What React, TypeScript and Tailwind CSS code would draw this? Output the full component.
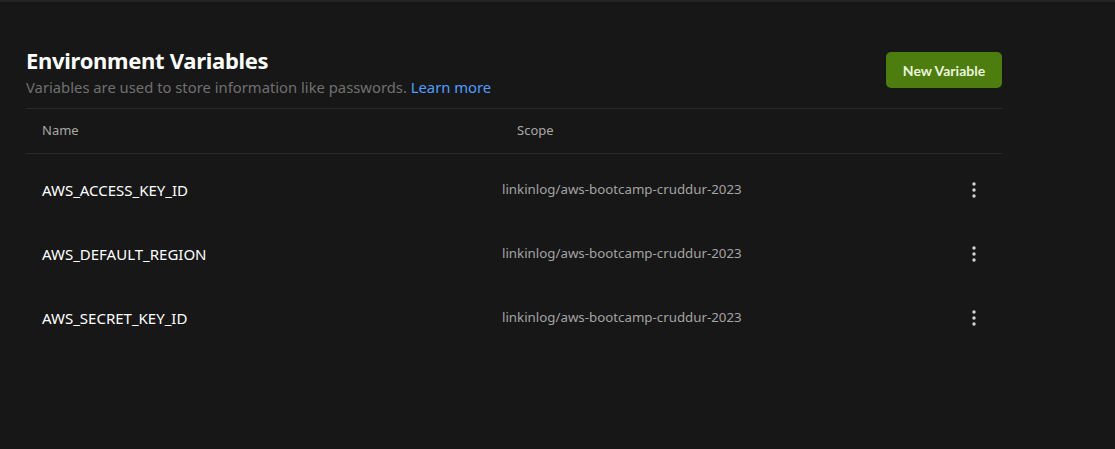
import React from 'react';

const rows = [
    { name: 'AWS_ACCESS_KEY_ID', scope: 'linkinlog/aws-bootcamp-cruddur-2023' },
    { name: 'AWS_DEFAULT_REGION', scope: 'linkinlog/aws-bootcamp-cruddur-2023' },
    { name: 'AWS_SECRET_KEY_ID', scope: 'linkinlog/aws-bootcamp-cruddur-2023' },
];

function Kebab() {
    return (
        <svg width="4" height="16" viewBox="0 0 4 16" className="text-[#d4d4d4]">
            <circle cx="2" cy="2" r="1.7" fill="currentColor" />
            <circle cx="2" cy="8" r="1.7" fill="currentColor" />
            <circle cx="2" cy="14" r="1.7" fill="currentColor" />
        </svg>
    );
}

export default function App() {
    return (
        <div className="h-[449px] w-[1115px] overflow-hidden bg-[#171717] border-t-2 border-[#232323] font-['Noto_Sans','Open_Sans',sans-serif]">
            <div className="w-[976px] ml-[26px] pt-[43px]">
                <div className="flex items-start justify-between">
                    <div>
                        <h1 className="text-[22px] leading-[30px] font-bold text-white tracking-[-0.3px]">Environment Variables</h1>
                        <p className="text-[14.8px] leading-[20px] text-[#707070] mt-[2px]">
                            Variables are used to store information like passwords.{' '}
                            <a className="text-[#4f9dff]">Learn more</a>
                        </p>
                    </div>
                    <button className="mt-[7px] h-[36px] w-[116px] rounded-[5px] bg-[#4d7c0f] text-[14px] font-bold text-[#eaf5d8] font-['Lato',sans-serif]">
                        New Variable
                    </button>
                </div>
                <div className="mt-[11px] border-t border-[#2a2a2a]" />
                <div className="flex h-[44px] items-center text-[13px] text-[#a8a8a8]">
                    <div className="w-[491px] pl-[16px]">Name</div>
                    <div>Scope</div>
                </div>
                <div className="border-t border-[#2a2a2a]" />
                <div className="pt-[4px]">
                    {rows.map((row) => (
                        <div key={row.name} className="flex h-[64px] items-center">
                            <div className="w-[476px] pl-[16px] text-[15px] text-white">{row.name}</div>
                            <div className="flex-1 text-[13.3px] text-[#a3a3a3]">{row.scope}</div>
                            <div className="w-[32px] flex justify-start pl-[2px]">
                                <Kebab />
                            </div>
                        </div>
                    ))}
                </div>
            </div>
        </div>
    );
}
